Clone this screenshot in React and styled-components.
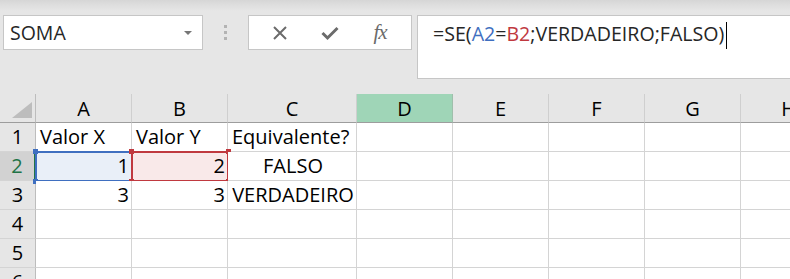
import React from "react";
import styled, { createGlobalStyle } from "styled-components";

const GlobalStyle = createGlobalStyle`
  html, body {
    margin: 0;
    padding: 0;
    background: #e6e6e6;
    overflow: hidden;
  }
`;

const CELL_FONT = `"Open Sans", "Noto Sans", sans-serif`;
const UI_FONT = `"Open Sans", "Noto Sans", sans-serif`;

const Page = styled.div`
  width: 790px;
  height: 279px;
  overflow: hidden;
  background: #e6e6e6;
`;

const TopBar = styled.div`
  height: 94px;
  display: flex;
  align-items: flex-start;
  padding: 15px 0 0 3px;
  box-sizing: border-box;
  background: linear-gradient(#d6d6d6 0px, #dedede 5px, #e6e6e6 11px);
`;

const NameBox = styled.div`
  width: 200px;
  height: 35px;
  box-sizing: border-box;
  background: #fff;
  border: 1px solid #c6c6c6;
  display: flex;
  align-items: center;
  justify-content: space-between;
  padding: 0 10px 0 6px;
  font-family: ${UI_FONT};
  font-size: 19.5px;
  color: #262626;
`;

const DropArrow = styled.span`
  width: 0;
  height: 0;
  border-left: 4px solid transparent;
  border-right: 4px solid transparent;
  border-top: 4px solid #767676;
`;

const Grip = styled.div`
  width: 45px;
  height: 35px;
  display: flex;
  flex-direction: column;
  align-items: center;
  justify-content: center;
  gap: 3px;
  span {
    width: 3px;
    height: 3px;
    background: #b3b3b3;
  }
`;

const ButtonBox = styled.div`
  width: 164px;
  height: 35px;
  box-sizing: border-box;
  background: #fff;
  border: 1px solid #c6c6c6;
  display: flex;
  align-items: center;
  justify-content: space-around;
  padding: 0 6px;
`;

const IconButton = styled.span`
  width: 40px;
  display: flex;
  align-items: center;
  justify-content: center;
  color: #6b6b6b;
`;

const FxText = styled.span`
  font-family: "Liberation Serif", "DejaVu Serif", serif;
  font-style: italic;
  font-size: 21px;
  color: #6b6b6b;
  letter-spacing: -1px;
`;

const FormulaBar = styled.div`
  margin-left: 5px;
  flex: 1;
  height: 64px;
  box-sizing: border-box;
  background: #fff;
  border: 1px solid #c6c6c6;
  border-right: none;
  padding: 4px 0 0 15px;
  font-family: ${UI_FONT};
  font-size: 19.6px;
  color: #262626;
  display: flex;
  align-items: flex-start;
`;

const Ref = styled.span`
  color: ${(p) => p.color};
`;

const Caret = styled.span`
  display: inline-block;
  width: 1px;
  height: 27px;
  background: #000;
  margin-left: 2px;
  margin-top: 2px;
`;

const Sheet = styled.div`
  display: grid;
  grid-template-columns: 36px 96px 96px 129px 96px 96px 96px 96px 96px;
  grid-auto-rows: 29px;
  font-family: ${CELL_FONT};
  font-size: 20px;
  line-height: 20px;
  color: #000;
`;

const Corner = styled.div`
  background: #e6e6e6;
  border-right: 1px solid #bdbdbd;
  border-bottom: 1px solid #9d9d9d;
  box-sizing: border-box;
  display: flex;
  align-items: flex-end;
  justify-content: flex-end;
  padding: 0 3px 4px 0;
`;

const ColHead = styled.div`
  box-sizing: border-box;
  background: ${(p) => (p.active ? "#9fd5b7" : "#e6e6e6")};
  border-right: 1px solid ${(p) => (p.active ? "#9fbfab" : "#cfcfcf")};
  border-bottom: 1px solid #9d9d9d;
  display: flex;
  align-items: flex-end;
  justify-content: center;
  padding-bottom: 3px;
  white-space: nowrap;
  overflow: hidden;
`;

const RowHead = styled.div`
  box-sizing: border-box;
  background: ${(p) => (p.active ? "#d2d2d2" : "#e6e6e6")};
  color: ${(p) => (p.active ? "#217346" : "#000")};
  border-right: ${(p) => (p.active ? "2px solid #217346" : "1px solid #bdbdbd")};
  border-bottom: 1px solid #d4d4d4;
  display: flex;
  align-items: flex-end;
  justify-content: center;
  padding-bottom: 4px;
`;

const Cell = styled.div`
  position: relative;
  box-sizing: border-box;
  background: #fff;
  border-right: 1px solid #d4d4d4;
  border-bottom: 1px solid #d4d4d4;
  display: flex;
  align-items: flex-end;
  justify-content: ${(p) =>
    p.align === "right" ? "flex-end" : p.align === "center" ? "center" : "flex-start"};
  padding: 0 2px 4px 4px;
  white-space: nowrap;
`;

const Highlight = styled.div`
  position: absolute;
  left: -1px;
  top: -1px;
  right: -2px;
  bottom: -2px;
  border: 2px solid ${(p) => p.color};
  background: ${(p) => p.fill};
  pointer-events: none;
`;

const Handle = styled.span`
  position: absolute;
  width: 5px;
  height: 5px;
  background: ${(p) => p.color};
  ${(p) => (p.top ? "top: -4px;" : "bottom: -4px;")}
  ${(p) => (p.leftSide ? "left: -4px;" : "right: -4px;")}
`;

const CellText = styled.span`
  position: relative;
`;

const cols = ["A", "B", "C", "D", "E", "F", "G", "H"];

const data = {
  1: { A: ["Valor X", "left"], B: ["Valor Y", "left"], C: ["Equivalente?", "left"] },
  2: { A: ["1", "right"], B: ["2", "right"], C: ["FALSO", "center"] },
  3: { A: ["3", "right"], B: ["3", "right"], C: ["VERDADEIRO", "center"] },
};

const BLUE = "#3f6fc0";
const RED = "#c0393f";

function CloseIcon() {
  return (
    <svg width="16" height="16" viewBox="0 0 16 16">
      <path d="M2 2 L14 14 M14 2 L2 14" stroke="#6b6b6b" strokeWidth="2" fill="none" />
    </svg>
  );
}

function CheckIcon() {
  return (
    <svg width="18" height="16" viewBox="0 0 18 16">
      <path d="M1.5 8 L6.5 13 L16.5 3" stroke="#6b6b6b" strokeWidth="3" fill="none" />
    </svg>
  );
}

function renderCell(row, col) {
  const entry = data[row] && data[row][col];
  const [text, align] = entry || ["", "left"];
  const isA2 = row === 2 && col === "A";
  const isB2 = row === 2 && col === "B";
  return (
    <Cell key={col + row} align={align}>
      {isA2 && (
        <Highlight color={BLUE} fill="#e9eff8">
          <Handle color={BLUE} top leftSide />
          <Handle color={BLUE} leftSide />
        </Highlight>
      )}
      {isB2 && (
        <Highlight color={RED} fill="#f9e9e9">
          <Handle color={RED} top leftSide />
          <Handle color={RED} leftSide />
          <Handle color={RED} top />
          <Handle color={RED} />
        </Highlight>
      )}
      <CellText>{text}</CellText>
    </Cell>
  );
}

export default function App() {
  const rows = [1, 2, 3, 4, 5, 6];
  return (
    <Page>
      <GlobalStyle />
      <TopBar>
        <NameBox>
          SOMA
          <DropArrow />
        </NameBox>
        <Grip>
          <span />
          <span />
          <span />
        </Grip>
        <ButtonBox>
          <IconButton>
            <CloseIcon />
          </IconButton>
          <IconButton>
            <CheckIcon />
          </IconButton>
          <IconButton>
            <FxText>fx</FxText>
          </IconButton>
        </ButtonBox>
        <FormulaBar>
          <span>
            =SE(<Ref color={BLUE}>A2</Ref>=<Ref color={RED}>B2</Ref>;VERDADEIRO;FALSO)
          </span>
          <Caret />
        </FormulaBar>
      </TopBar>
      <Sheet>
        <Corner>
          <svg width="20" height="16" viewBox="0 0 20 16">
            <polygon points="20,0 20,16 0,16" fill="#bdbdbd" />
          </svg>
        </Corner>
        {cols.map((c) => (
          <ColHead key={c} active={c === "D"}>
            {c}
          </ColHead>
        ))}
        {rows.map((r) => (
          <React.Fragment key={r}>
            <RowHead active={r === 2}>{r}</RowHead>
            {cols.map((c) => renderCell(r, c))}
          </React.Fragment>
        ))}
      </Sheet>
    </Page>
  );
}
